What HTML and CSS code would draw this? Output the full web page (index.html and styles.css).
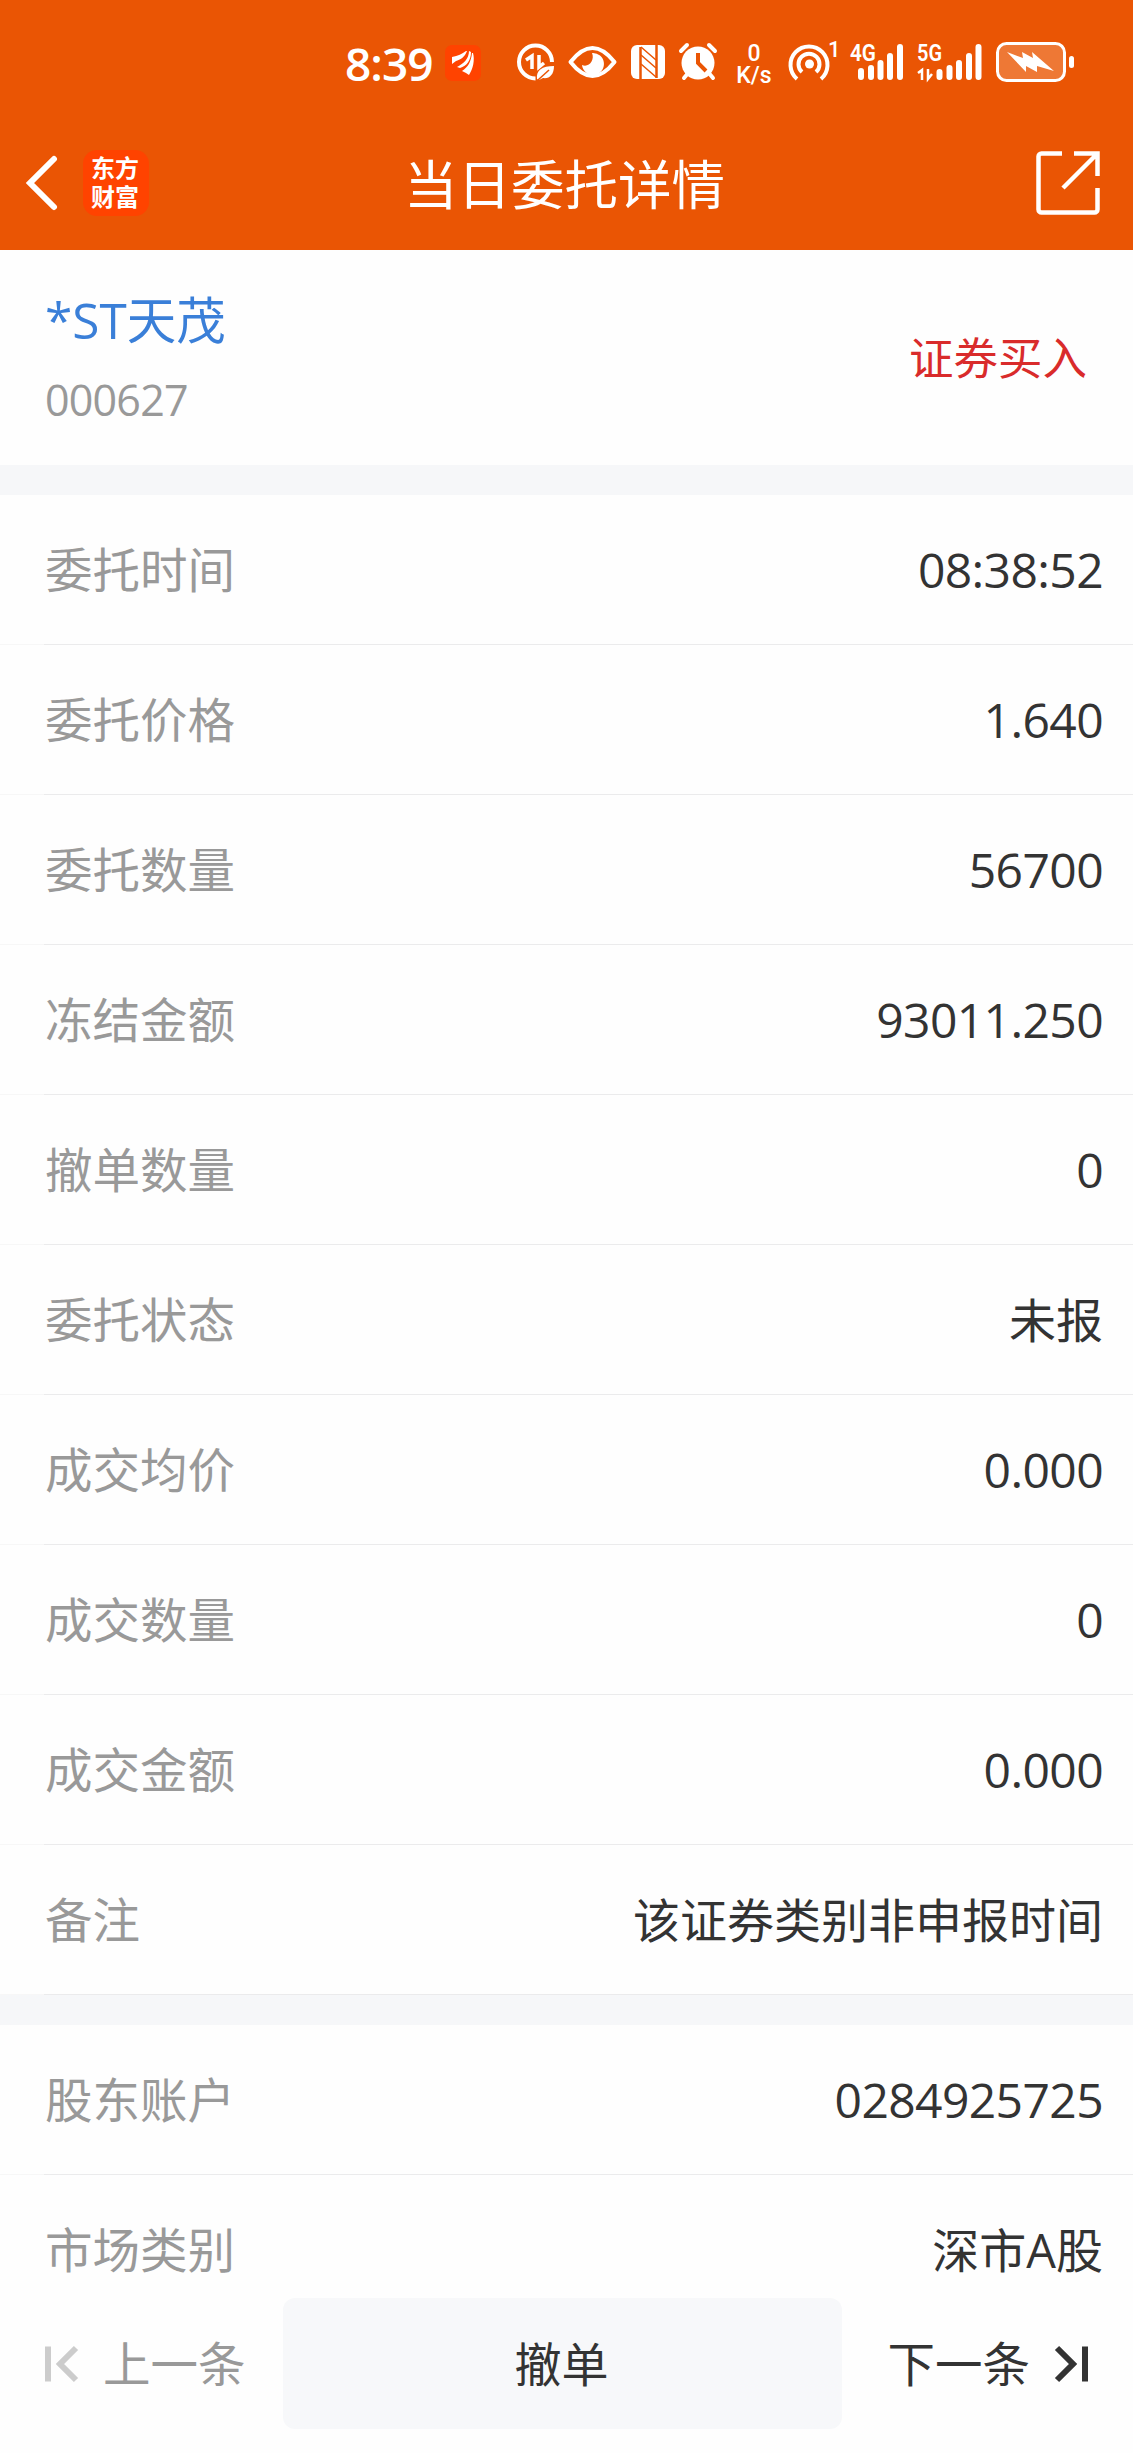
FILE: index.html
```html
<!DOCTYPE html>
<html lang="zh-CN">
<head>
  <meta charset="UTF-8">
  <meta name="viewport" content="width=device-width, initial-scale=1.0">
  <title>当日委托详情</title>
  <link rel="stylesheet" href="styles.css">
</head>
<body>
  <header class="header">
    <!-- Status bar -->
    <div class="status-bar">
      <span class="clock">8:39</span>
      <svg class="status-icons" width="733" height="50" viewBox="440 38 733 50" fill="none" stroke="#fff">
        <!-- App notification -->
        <rect x="445" y="45" width="36" height="36" rx="7" fill="#ff4300" stroke="none"/>
        <g fill="#fff" stroke="none">
          <path d="M452 57c6-1 10-3 14-6h1c-2 6-7 9-11 10l-4 3z"/>
          <path d="M469 51c0 8-6 13-12 16l3 1c7-2 11-8 11-16z"/>
          <path d="M473 53c2 7 0 16-4 22l-3-2-4-2c6-4 9-9 10-18z"/>
        </g>
        <!-- Data saver -->
        <path d="M552 62a16.500 16.500 0 1 0-16.500 16.500" stroke-width="4"/>
        <path d="M526 60l6-4v13M539 55v12l5-4" stroke-width="3.500"/>
        <path d="M537 79c-1-9 5-13 17-13 0 9-5 13-11 12l-4 2z" fill="#fff" stroke="none"/>
        <path d="M538 80l11-10" stroke="#ea5504" stroke-width="1.500"/>
        <!-- Eye comfort -->
        <path d="M570.500 62q22-28 44 0-22 28-44 0z" stroke-width="4" stroke-linejoin="round"/>
        <path d="M592 53a11 11 0 1 1-10 12c7 3 13-5 10-12z" fill="#fff" stroke="none"/>
        <!-- NFC -->
        <rect x="631" y="45" width="34" height="34" rx="6" fill="#fff" stroke="none"/>
        <path d="M640.500 79V47M656.500 45v33" stroke="#ea5504" stroke-width="2.500"/>
        <path d="M641 47l15 13M641 55l15 13M641 64l15 13" stroke="#ea5504" stroke-width="1.500"/>
        <!-- Alarm -->
        <circle cx="698" cy="63" r="16.500" fill="#fff" stroke="none"/>
        <path d="M681 51l6-6M715 51l-6-6M684 78l5-6M713 78l-5-6" stroke-width="4" stroke-linecap="round"/>
        <path d="M698 53v10l8 8" stroke="#ea5504" stroke-width="4"/>
        <!-- Network speed -->
        <g fill="#fff" stroke="none" class="icon-text">
          <text x="754" y="60.500" font-size="23" text-anchor="middle">0</text>
          <text x="754" y="82.500" font-size="23" text-anchor="middle">K/s</text>
          <text x="828" y="57" font-size="22">1</text>
          <text x="850" y="61" font-size="23" font-weight="600" textLength="26" lengthAdjust="spacingAndGlyphs">4G</text>
          <text x="917" y="61" font-size="23" font-weight="600" textLength="25" lengthAdjust="spacingAndGlyphs">5G</text>
        </g>
        <!-- Hotspot -->
        <path d="M797 79a18.500 18.500 0 1 1 24 0M802 72a10.500 10.500 0 1 1 14 0" stroke-width="4"/>
        <circle cx="809.500" cy="64" r="4.500" fill="#fff" stroke="none"/>
        <!-- Signals -->
        <path d="M861 71v6M871 68v9M880.500 63v14M890 56v21M900 47v30" stroke-width="6" stroke-linecap="round"/>
        <path d="M939.500 72v5M949.500 68v9M959 63v14M969 56v21M978.500 47v30" stroke-width="6" stroke-linecap="round"/>
        <path d="M918 73l4-3v10M928 69v10l4-5" stroke-width="2.500"/>
        <!-- Battery -->
        <rect x="997.500" y="43.500" width="67" height="37" rx="9" fill="#ee7835" stroke-width="3"/>
        <path d="M1007 52l16 6-1-6 11 6-1-6 22 19-17-5 0 6-11-6 0 6z" fill="#fff" stroke="none"/>
        <rect x="1069" y="56" width="5" height="12" rx="2.500" fill="#fff" stroke="none"/>
      </svg>
    </div>

    <!-- Title bar -->
    <div class="nav-bar">
      <div class="nav-left">
        <svg width="34" height="56" viewBox="0 0 34 56" fill="none" stroke="#fff" stroke-width="6" stroke-linecap="round">
          <path d="M30 4L6 28l24 24"/>
        </svg>
        <div class="app-logo"><span>东方</span><span>财富</span></div>
      </div>
      <h1>当日委托详情</h1>
      <svg class="share" width="64" height="64" viewBox="0 0 64 64" fill="none" stroke="#fff" stroke-width="4.500">
        <path d="M26 2.500H5.500a3 3 0 0 0-3 3v53a3 3 0 0 0 3 3h53a3 3 0 0 0 3-3V37M38 2.500h23.500V25M61 3L27 37"/>
      </svg>
    </div>
  </header>

  <main>
    <section class="stock">
      <div>
        <div class="stock-name">*ST天茂</div>
        <div class="stock-code">000627</div>
      </div>
      <div class="direction">证券买入</div>
    </section>

    <section class="group">
      <div class="row"><span class="label">委托时间</span><span class="value">08:38:52</span></div>
      <div class="row"><span class="label">委托价格</span><span class="value">1.640</span></div>
      <div class="row"><span class="label">委托数量</span><span class="value">56700</span></div>
      <div class="row"><span class="label">冻结金额</span><span class="value">93011.250</span></div>
      <div class="row"><span class="label">撤单数量</span><span class="value">0</span></div>
      <div class="row"><span class="label">委托状态</span><span class="value text">未报</span></div>
      <div class="row"><span class="label">成交均价</span><span class="value">0.000</span></div>
      <div class="row"><span class="label">成交数量</span><span class="value">0</span></div>
      <div class="row"><span class="label">成交金额</span><span class="value">0.000</span></div>
      <div class="row"><span class="label">备注</span><span class="value text">该证券类别非申报时间</span></div>
    </section>

    <section class="group">
      <div class="row"><span class="label">股东账户</span><span class="value">0284925725</span></div>
      <div class="row"><span class="label">市场类别</span><span class="value text">深市A股</span></div>
    </section>
  </main>

  <footer class="bottom-bar">
    <div class="prev">
      <svg width="34" height="38" viewBox="0 0 34 38" fill="none" stroke="#ccc" stroke-width="6">
        <path d="M3 1.500v35M31 3L15 19l16 16"/>
      </svg>
      <span>上一条</span>
    </div>
    <button class="cancel-btn">撤单</button>
    <div class="next">
      <span>下一条</span>
      <svg width="34" height="38" viewBox="0 0 34 38" fill="none" stroke="#333" stroke-width="6">
        <path d="M31 1.500v35M3 3l16 16L3 35"/>
      </svg>
    </div>
  </footer>
</body>
</html>
```
FILE: styles.css
```css
* {
  margin: 0;
  padding: 0;
  box-sizing: border-box;
}

body {
  width: 1133px;
  height: 2453px;
  display: flex;
  flex-direction: column;
  overflow: hidden;
  background: #fefefe;
  color: #333;
  font-family: "Open Sans", "Noto Sans CJK SC", sans-serif;
  font-size: 47px;
}

.header {
  height: 250px;
  flex-shrink: 0;
  background: #ea5504;
  color: #fff;
}

.status-bar {
  height: 117px;
  display: flex;
  align-items: center;
  padding: 9px 0 0 345px;
  overflow: hidden;
}

.clock {
  width: 95px;
  flex-shrink: 0;
  font-size: 46px;
  font-weight: 600;
  letter-spacing: -1px;
  line-height: 50px;
}

.status-icons {
  flex-shrink: 0;
}

.icon-text {
  font-family: Roboto, sans-serif;
  font-weight: 500;
}

.nav-bar {
  height: 132px;
  display: grid;
  grid-template-columns: 1fr auto 1fr;
  align-items: center;
  padding: 0 33px 0 24px;
}

.nav-left {
  display: flex;
  align-items: center;
  gap: 25px;
}

.app-logo {
  width: 66px;
  height: 66px;
  display: flex;
  flex-direction: column;
  justify-content: center;
  align-items: center;
  padding: 0 2px 3px 0;
  border-radius: 14px;
  background: #ff4300;
  font-size: 24px;
  font-weight: 700;
  line-height: 29px;
}

.nav-bar h1 {
  padding: 3px 0 0 5px;
  font-size: 53.5px;
  font-weight: 400;
  line-height: 70px;
}

.share {
  justify-self: end;
}

.stock {
  height: 215px;
  display: flex;
  justify-content: space-between;
  align-items: center;
  padding: 0 46px 0 45px;
}

.stock-name {
  padding-top: 4px;
  color: #3a7fd8;
  font-size: 49.5px;
  line-height: 80px;
}

.stock-code {
  color: #999;
  font-size: 43px;
  letter-spacing: -0.8px;
  line-height: 80px;
}

.direction {
  padding-bottom: 4px;
  color: #d92b2b;
  font-size: 44.5px;
}

.group {
  border-top: 30px solid #f6f7f9;
}

.row {
  height: 150px;
  display: flex;
  justify-content: space-between;
  align-items: center;
  padding: 0 30px 0 45px;
  border-bottom: 1px solid;
  border-image: linear-gradient(to right, #f7f7f7 45px, #ebebec 45px) 1;
}

.label {
  padding-bottom: 4px;
  color: #999;
  font-size: 47.5px;
}

.value {
  font-size: 48px;
  letter-spacing: -0.6px;
}

.value.text {
  padding-bottom: 4px;
  font-size: 47px;
  letter-spacing: 0;
}

/* Pinned over the end of the list */
.bottom-bar {
  position: fixed;
  left: 0;
  bottom: 0;
  width: 1133px;
  height: 163px;
  display: flex;
  align-items: center;
  padding: 0 45px;
  padding-bottom: 16px;
  background: #fefefe;
}

.prev,
.next {
  display: flex;
  align-items: center;
  gap: 24px;
}

.prev span,
.next span {
  padding-bottom: 5px;
  font-size: 47.5px;
}

.prev {
  width: 238px;
  color: #999;
}

.next {
  margin-left: auto;
}

.cancel-btn {
  width: 559px;
  height: 131px;
  padding: 0 2px 5px 0;
  border: none;
  border-radius: 12px;
  background: #f7f8fa;
  color: #333;
  font-family: inherit;
  font-size: 47px;
}
```
